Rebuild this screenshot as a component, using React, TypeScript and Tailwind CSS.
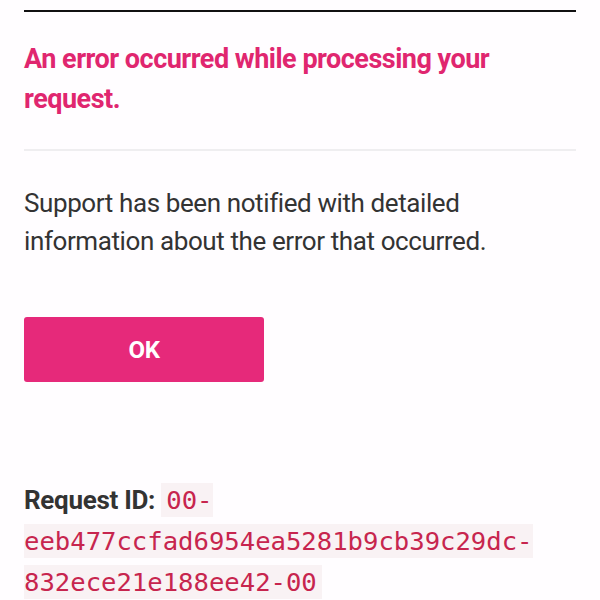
import React from "react";

export default function App() {
  const sans = { fontFamily: 'Roboto, "Liberation Sans", sans-serif' };
  return (
    <div className="min-h-[600px] w-[600px] bg-[#fffdff] px-6" style={sans}>
      <div className="pt-[10px]">
        <div className="h-[2px] bg-[#111]" />
      </div>
      <h1 className="mt-[27px] text-[27px] font-bold leading-[40px] tracking-[-0.5px] text-[#e0266f]">
        An error occurred while processing your request.
      </h1>
      <div className="mt-[30px] h-[2px] bg-[#efeef0]" />
      <p className="mt-[33px] text-[26px] leading-[38px] tracking-[-0.4px] text-[#333]">
        Support has been notified with detailed information about the error that occurred.
      </p>
      <button className="mt-[57px] flex h-[65px] w-[240px] items-center justify-center rounded-[3px] bg-[#e6297a] text-[24px] font-bold tracking-[-0.5px] text-white">
        OK
      </button>
      <div className="mt-[98px] text-[26px] font-bold leading-[41px] tracking-[-0.3px] text-[#333]">
        Request ID:{" "}
        <code
          className="bg-[#f9f2f4] px-[5px] py-[2px] text-[25.6px] font-normal tracking-normal text-[#c7254e]"
          style={{ fontFamily: '"DejaVu Sans Mono", monospace' }}
        >
          00-eeb477ccfad6954ea5281b9cb39c29dc-832ece21e188ee42-00
        </code>
      </div>
    </div>
  );
}
